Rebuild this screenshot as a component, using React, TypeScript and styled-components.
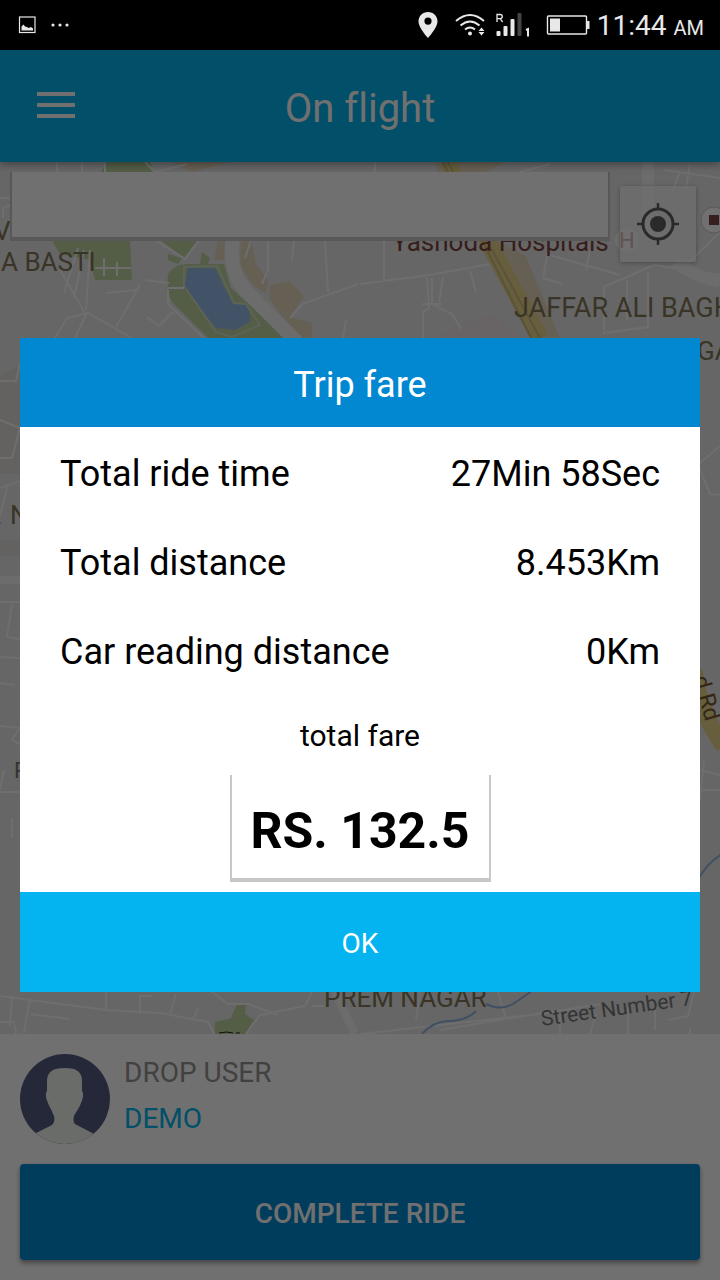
import React from "react";
import styled, { createGlobalStyle } from "styled-components";

const GlobalStyle = createGlobalStyle`
  *, *::before, *::after { box-sizing: border-box; }
  body { margin: 0; background: #fff; font-family: Roboto, "Liberation Sans", sans-serif; font-variant-ligatures: none; }
  button, input { font: inherit; border: 0; border-radius: 0; padding: 0; margin: 0; }
`;

const color = {
  sky: "#03b4f0",
  blue: "#0288d1",
  edge: "#c8c8c8",
  status: "#e8e8e8",
};

const Screen = styled.div`
  min-height: 100vh;
  display: flex;
  flex-direction: column;
`;

const StatusBar = styled.header`
  height: 50px;
  padding: 0 16px 0 18px;
  background: #000;
  color: ${color.status};
  display: flex;
  align-items: center;
  justify-content: space-between;
`;

const StatusGroup = styled.div<{ $gap: number }>`
  display: flex;
  align-items: center;
  gap: ${(p) => p.$gap}px;
  svg { display: block; }
`;

const Clock = styled.time`
  font-size: 28px;
  line-height: 46px;
  padding-top: 4px;
  small { font-size: 20px; }
`;

const AppArea = styled.div`
  position: relative;
  flex: 1;
  display: flex;
  flex-direction: column;
`;

const Toolbar = styled.div`
  position: relative;
  z-index: 1;
  height: 112px;
  padding: 0 36px;
  background: ${color.sky};
  box-shadow: 0 2px 8px rgba(0, 0, 0, 0.4);
  color: #fff;
  display: grid;
  grid-template-columns: 40px 1fr 40px;
  align-items: center;
`;

const MenuButton = styled.button`
  height: 40px;
  background: none;
  svg { display: block; }
`;

const Title = styled.h1`
  margin: 0;
  padding-top: 6px;
  font-size: 40px;
  line-height: 48px;
  font-weight: 400;
  text-align: center;
`;

const MapArea = styled.main`
  position: relative;
  flex: 1;
  overflow: hidden;
  background: #ebebeb;
`;

const MapDrawing = styled.svg`
  position: absolute;
  inset: 0;
  width: 100%;
  height: 100%;
`;

const MapControls = styled.div`
  position: relative;
  display: flex;
  align-items: flex-start;
  gap: 10px;
  padding: 10px 24px 0 10px;
`;

const Search = styled.input`
  flex: 1;
  min-width: 0;
  height: 69px;
  padding: 0 16px;
  background: #fff;
  border: solid ${color.edge};
  border-width: 0 2px 4px;
  font-size: 28px;
`;

const LocateButton = styled.button`
  width: 76px;
  height: 76px;
  margin-top: 14px;
  display: grid;
  place-items: center;
  background: rgba(255, 255, 255, 0.6);
  border-radius: 2px;
  box-shadow: 0 1px 4px rgba(0, 0, 0, 0.3);
`;

const RidePanel = styled.section`
  padding: 20px;
  background: #fff;
  display: flex;
  flex-direction: column;
  gap: 20px;
`;

const Rider = styled.div`
  display: flex;
  align-items: flex-start;
  gap: 14px;
`;

const RiderText = styled.div`
  height: 90px;
  display: flex;
  flex-direction: column;
  font-size: 28px;
  line-height: 46px;
  margin-top: -4px;
`;

const RiderLabel = styled.span`
  color: #949494;
`;

const RiderName = styled.span`
  color: ${color.sky};
`;

const CompleteButton = styled.button`
  height: 96px;
  padding-top: 2px;
  background: ${color.blue};
  color: #fff;
  border-radius: 4px;
  box-shadow: 0 3px 5px rgba(0, 0, 0, 0.4);
  font-size: 28px;
  font-weight: 500;
`;

const Scrim = styled.div`
  position: absolute;
  inset: 0;
  z-index: 2;
  padding: 20px;
  background: rgba(0, 0, 0, 0.56);
  display: flex;
  flex-direction: column;
  justify-content: center;
`;

const Dialog = styled.section`
  background: #fff;
  color: #000;
  display: flex;
  flex-direction: column;
`;

const DialogTitle = styled.h2`
  margin: 0;
  height: 89px;
  background: ${color.blue};
  color: #fff;
  font-size: 36px;
  line-height: 95px;
  font-weight: 400;
  text-align: center;
`;

const Details = styled.dl`
  margin: 0;
  padding: 0 40px;
`;

const DetailRow = styled.div`
  display: flex;
  justify-content: space-between;
  font-size: 36px;
  height: 89px;
  line-height: 95px;
  dt, dd { margin: 0; }
`;

const Fare = styled.div`
  display: flex;
  flex-direction: column;
  align-items: center;
  padding-bottom: 10px;
`;

const FareLabel = styled.label`
  height: 81px;
  font-size: 30px;
  line-height: 83px;
`;

const FareValue = styled.output`
  height: 107px;
  padding: 0 19px;
  border: solid ${color.edge};
  border-width: 0 2px 4px;
  font-size: 50px;
  line-height: 113px;
  font-weight: 700;
`;

const OkButton = styled.button`
  height: 100px;
  padding-top: 2px;
  background: ${color.sky};
  color: #fff;
  font-size: 28px;
`;

const details = [
  { label: "Total ride time", value: "27Min 58Sec" },
  { label: "Total distance", value: "8.453Km" },
  { label: "Car reading distance", value: "0Km" },
];

function StatusIcons() {
  return (
    <svg width="174" height="32" viewBox="418 9 174 32" fill={color.status} aria-hidden="true">
      <path fillRule="evenodd" d="M429 12c-5.400 0-9.500 4.100-9.500 9.300C419.500 28 429 38 429 38s9.500-10 9.500-16.700C438.500 16.100 434.400 12 429 12zm0 5.500a3.600 3.600 0 1 1 0 7.200 3.600 3.600 0 0 1 0-7.200z" />
      <g fill="none" stroke={color.status} strokeWidth="2">
        <path d="M457 21q14-12 28 0" />
        <path d="M461.500 25.500q9.500-8 19 0" />
        <path d="M466 29.500q5-4 10 0" />
      </g>
      <circle cx="471" cy="33.500" r="2" />
      <path d="M482.500 27.500l3 3.500h-6zM482.500 35.500l-3-3.500h6z" />
      <path d="M498 22v-7.500h3.200a2 2 0 0 1 0 4.200H498m3.200 0l2.400 3.300" fill="none" stroke={color.status} strokeWidth="1.300" />
      <rect x="497.500" y="31" width="4" height="5" rx="1" />
      <rect x="504.500" y="26" width="4" height="10" rx="1" />
      <rect x="511.500" y="19" width="4" height="17" rx="1" />
      <rect x="518.500" y="13" width="4" height="23" rx="1" fill="#444" />
      <path d="M527 30l2-1v7.500" fill="none" stroke={color.status} strokeWidth="2" />
      <rect x="548.500" y="16" width="39" height="18" rx="1" fill="none" stroke={color.status} strokeWidth="1.400" />
      <rect x="551" y="18.500" width="10" height="13" />
      <rect x="588" y="21" width="2.500" height="8" />
    </svg>
  );
}

function CityMap() {
  return (
    <MapDrawing viewBox="0 162 720 872" preserveAspectRatio="xMidYMin slice" aria-hidden="true">
      <rect y="162" width="720" height="872" fill="#e8e8e8" />
      <path d="M430 338l60-24 32 24z" fill="#ece3e5" />
      <path d="M0 376l20-12v110H0zM0 540h20v16H0z" fill="#e2e0da" />
      <g fill="#bfd4a0">
        <path d="M106 162h44l6 12h-56zM52 240h78l2 40H95l-5-20-30-6zM160 240h38l-14 18zM202 252l8 6-2 6h-8zM168 254l14 4-4 6-10-4z" />
        <path d="M168 274q6-10 20-10h36l7 24 13 12 44 38h-80l-36-36q-6-14-4-28z" />
        <path d="M215 1034v-12l16-4 6-14h9l-1 10 9 6-9 14z" />
      </g>
      <g fill="#e9d8c0">
        <path d="M172 162h60l-40 10zM270 285l20-4 14 16-14 20 22 6v15h-17l-12-20-14-20z" />
        <path d="M241 240h10l5 24 12 16-2 14-12-8-14-20zM218 240h10l-4 20h-10z" />
        <path d="M435 162h70l-22 12h-45zM496 240l30 16 8 20 26 62h-30z" />
      </g>
      <path d="M188 268h27l18 36h13l4 9v9l-15 8-19-2-32-40z" fill="#9abdea" />
      <g fill="none" stroke="#fafafa" strokeWidth="2">
        <path d="M184 267l33-1 17 37 12 1 14 21-28 12-16-5-32-46z" stroke="#d3e2c4" />
        <path d="M60 270l26 45-30 62M78 248l-14 45M84 250l-10 48M90 250l-4 60M95 268h36M104 258v18M117 262v14M55 338l12-20 21-5 44 25M106 293l33-3M140 285l-24 42M145 280l24 3M168 288h16M168 290v14l36 34M147 317l12 9 14-14M155 240l30 19 14-19M268 240v30l-6 14M251 240l-6 18M294 240l-2 20M325 240l3 52M290 318l12-14 56-20M346 320l-3 18M384 240v42M360 284l70-9 60-11M427 278l2 30-6 4v26M432 278v26l20 10 9 15M443 278l-4 24M470 271l6 21M422 304h20M550 255l70 20M548 250l-5 28 20 6M590 250l-4 20M604 330v-43l50-22M627 280v40M648 272v55l-45 6M680 172l-8 20M690 164l-4 24M664 170l56 8M720 232l-35 34M654 265l66 10" />
        <path d="M0 198h12M3 218v-10l8-3M57 162v10M82 162v10M105 162v10M145 162l10 10 32-8M375 162v10M520 172l30-8" />
        <path d="M0 381h16l4-18M0 420l20 8-8 30H0M0 488l20-7M8 484l-8 32M0 602h20M12 604l-5 33 13 2M0 657l20 1M0 683l15 2M0 726l20 2-8 12 8 4M4 770l-4 20M0 792h20M12 818v20M720 446l-20 17M700 470l10 24 10 1M700 770l20 5M700 790h20M704 760l-4 40" />
        <path d="M106 992v18M0 996l106 14 54 3 48 9 6 12M12 996l-2 30M30 998l-6 34M30 1014l40 5M0 1022h14l2 12M140 1014v-18h12M176 994l-6 20M198 1008l-4 10M212 992l16 12h20l30 11M305 1006l-45 9-14 19M305 1006l7-14M312 1006h12M360 1034l180-20 60-10M420 992l-4 28M440 1030l120-20M498 992l8 26M560 1014v20M596 1014l-6 20M628 1008v26M655 1010v20M668 1020l20-4 6-24M690 1028v6" />
      </g>
      <g fill="none" stroke="#f5f5f5">
        <path d="M233 236q-6 34 14 56l50 50" strokeWidth="14" />
        <path d="M648 160v75M675 262q20 15 45 20" strokeWidth="12" />
        <path d="M0 580h20M335 992l20 42" strokeWidth="8" />
      </g>
      <path d="M448 162l42 84 50 92M694 670q4 40 30 76" fill="none" stroke="#ead68e" strokeWidth="17" />
      <path d="M448 162l42 84 50 92M443 162l42 84 46 92" fill="none" stroke="#cfbd80" strokeWidth="2" />
      <path d="M422 1034q10-12 26-13 18 0 28-10M486 1004q16 8 30-2l20-14M698 880q8-16 24-26" fill="none" stroke="#94b4e0" strokeWidth="2" />
      <g fontFamily="Roboto, sans-serif" fontSize="26" fill="#847858">
        <text x="-6" y="240">V</text>
        <text x="1" y="271">A BASTI</text>
        <text x="514" y="317" fontSize="27">JAFFAR ALI BAGH</text>
        <text x="697" y="360">GARDEN</text>
        <text x="-16" y="524">A</text>
        <text x="10" y="524">N</text>
        <text x="324" y="1007">PREM NAGAR</text>
        <text x="392" y="251" fill="#7c4440">Yashoda Hospitals</text>
        <text x="14" y="778" fontSize="22" fill="#777">R</text>
        <text x="542" y="1026" fontSize="21" fill="#777" transform="rotate(-8 542 1026)">Street Number 7</text>
        <text x="693" y="678" fontSize="23" fill="#7a5a30" transform="rotate(74 693 678)">d Rd</text>
      </g>
      <circle cx="627" cy="240" r="12" fill="#f8f8f8" />
      <text x="619" y="248" fontFamily="Roboto, sans-serif" fontSize="22" fill="#b05050">H</text>
      <circle cx="714" cy="220" r="13" fill="#fff" stroke="#ccc" />
      <rect x="709" y="215" width="10" height="10" fill="#804848" />
      <path d="M219 1033q8-2 14 0M236 1033h4" stroke="#222" fill="none" />
    </MapDrawing>
  );
}

export default function App() {
  return (
    <Screen>
      <GlobalStyle />
      <StatusBar>
        <StatusGroup $gap={14}>
          <svg width="18" height="18" viewBox="0 0 18 18" aria-hidden="true">
            <rect x="1.500" y="1" width="15.500" height="15.500" fill="none" stroke={color.status} strokeWidth="1.200" />
            <path d="M3.500 14.500V10.500l2-2 1.500 2 2 .5 1.500 1 2.500-1 2 1.500v2z" fill={color.status} />
          </svg>
          <svg width="20" height="4" viewBox="0 0 20 4" fill={color.status} aria-hidden="true">
            <circle cx="3" cy="2" r="1.600" />
            <circle cx="10" cy="2" r="1.600" />
            <circle cx="17" cy="2" r="1.600" />
          </svg>
        </StatusGroup>
        <StatusGroup $gap={6}>
          <StatusIcons />
          <Clock>11:44 <small>AM</small></Clock>
        </StatusGroup>
      </StatusBar>
      <AppArea>
        <Toolbar>
          <MenuButton type="button" aria-label="Menu">
            <svg width="40" height="40" viewBox="0 0 40 40" fill="none" stroke="#fff" strokeWidth="4" aria-hidden="true">
              <path d="M1 8h38M1 19h38M1 30h38" />
            </svg>
          </MenuButton>
          <Title>On flight</Title>
        </Toolbar>
        <MapArea>
          <CityMap />
          <MapControls>
            <Search type="text" aria-label="Search location" />
            <LocateButton type="button" aria-label="My location">
              <svg width="42" height="42" viewBox="0 0 42 42" fill="none" stroke="#606060" aria-hidden="true">
                <circle cx="21" cy="21" r="15" strokeWidth="3" />
                <circle cx="21" cy="21" r="8" fill="#606060" stroke="none" />
                <path d="M21 0v7M21 35v7M0 21h7M35 21h7" strokeWidth="2.500" />
              </svg>
            </LocateButton>
          </MapControls>
        </MapArea>
        <RidePanel>
          <Rider>
            <svg width="90" height="90" viewBox="0 0 90 90" role="img" aria-label="User photo">
              <defs><clipPath id="face"><circle cx="45" cy="45" r="45" /></clipPath></defs>
              <g clipPath="url(#face)">
                <rect width="90" height="90" fill="#535b80" />
                <path d="M45 14c12 0 17 4 17 13v10c2 2 1 8-1 12-1 4-4 7-6 11-2 3-2 8 0 10l19 10v12H14V80l18-9c3-3 3-8 1-11-1-4-4-7-5-11-2-4-3-10-1-12v-9c0-10 5-14 18-14z" fill="#f2f5f2" />
              </g>
            </svg>
            <RiderText>
              <RiderLabel>DROP USER</RiderLabel>
              <RiderName>DEMO</RiderName>
            </RiderText>
          </Rider>
          <CompleteButton type="button">COMPLETE RIDE</CompleteButton>
        </RidePanel>
        <Scrim>
          <Dialog role="dialog" aria-modal="true" aria-labelledby="fare-title">
            <DialogTitle id="fare-title">Trip fare</DialogTitle>
            <Details>
              {details.map((d) => (
                <DetailRow key={d.label}>
                  <dt>{d.label}</dt>
                  <dd>{d.value}</dd>
                </DetailRow>
              ))}
            </Details>
            <Fare>
              <FareLabel htmlFor="fare">total fare</FareLabel>
              <FareValue id="fare">RS. 132.5</FareValue>
            </Fare>
            <OkButton type="button">OK</OkButton>
          </Dialog>
        </Scrim>
      </AppArea>
    </Screen>
  );
}
